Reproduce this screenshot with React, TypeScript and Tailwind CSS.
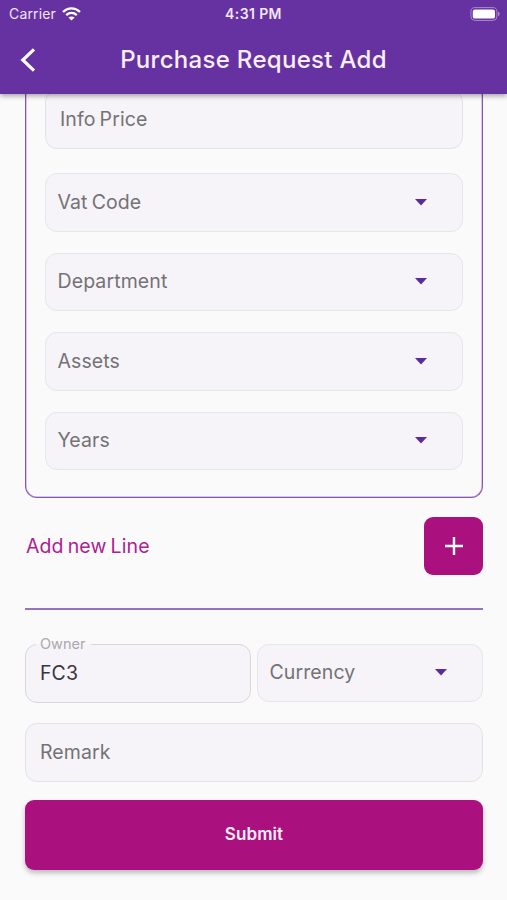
import type { ReactNode } from "react";

interface SelectFieldProps {
	label: string;
	className?: string;
}

function Caret() {
	return (
		<svg width="12" height="7" viewBox="0 0 12 7" fill="#5b2a9d">
			<path d="M0 0H12L6 6.4Z" />
		</svg>
	);
}

function SelectField({ label, className = "" }: SelectFieldProps) {
	return (
		<button
			type="button"
			className={`flex items-center justify-between rounded-xl border border-[#e3e6ea] bg-[#f6f4f8] pl-[11.5px] pr-[35px] text-left text-[19.5px] tracking-[0.1px] text-[#747276] [word-spacing:-1.5px] ${className}`}
		>
			<span>{label}</span>
			<Caret />
		</button>
	);
}

function TextField({
	children,
	className = "",
}: {
	children: ReactNode;
	className?: string;
}) {
	return (
		<div
			className={`flex items-center rounded-xl border pl-3.5 text-[19.5px] tracking-[0.1px] text-[#747276] [word-spacing:-1.5px] ${className}`}
		>
			{children}
		</div>
	);
}

function StatusBar() {
	return (
		<div className="grid h-[27px] grid-cols-[1fr_auto_1fr] items-center px-[7px] text-[14px] text-[#f1e6fb]">
			<div className="flex items-center gap-1.5 pl-0.5">
				<span className="tracking-[0.15px]">Carrier</span>
				<svg width="19" height="14" viewBox="0 0 19 14" fill="none" stroke="#fff" strokeWidth="2.4">
					<path d="M1 5C6 0.2 13 0.2 18 5" />
					<path d="M4.2 8.2C7.4 5.3 11.6 5.3 14.8 8.2" />
					<path d="M6.4 10.6C8.3 9 10.7 9 12.6 10.6L9.5 13.6Z" fill="#fff" stroke="none" />
				</svg>
			</div>
			<span className="text-center font-semibold tracking-[0.4px]">4:31 PM</span>
			<svg className="justify-self-end" width="30" height="14" viewBox="0 0 30 14">
				<rect x="0.9" y="0.6" width="26" height="12.8" rx="4" fill="none" stroke="#a98acb" />
				<rect x="2.8" y="2.4" width="22.2" height="9.2" rx="2.2" fill="#fff" />
				<path d="M28 4.8C30.2 5.4 30.2 8.6 28 9.2Z" fill="#a98acb" />
			</svg>
		</div>
	);
}

export default function App() {
	return (
		<div className="h-[900px] w-[507px] overflow-hidden bg-[#fbfafb] font-['Inter',sans-serif]">
			<header className="relative z-10 h-[94px] bg-[#6631a0] shadow-[0_2px_5px_rgba(0,0,0,0.35)]">
				<StatusBar />
				<div className="grid h-[66px] grid-cols-[60px_1fr_60px] items-center">
					<button type="button" aria-label="Back" className="pl-5">
						<svg width="16" height="24" viewBox="0 0 16 24" fill="none" stroke="#fff" strokeWidth="3.2">
							<path d="M14 1.4L2.8 12L14 22.6" />
						</svg>
					</button>
					<h1 className="text-center text-[24px] font-medium tracking-[0.3px] text-[#f8effd]">
						Purchase Request Add
					</h1>
				</div>
			</header>

			<main className="-mt-1 pl-[25px] pr-6">
				<section className="flex h-[408px] flex-col rounded-b-xl border border-t-0 border-[#8557b5] px-[19px] shadow-[inset_0_0_0_0.5px_#b294d2]">
					<TextField className="mb-6 h-[59px] shrink-0 border-[#e3e2e7] bg-[#f6f4f8]">Info Price</TextField>
					<div className="flex flex-col gap-[21px]">
						<SelectField label="Vat Code" className="h-[58.5px]" />
						<SelectField label="Department" className="h-[58.5px]" />
						<SelectField label="Assets" className="h-[58.5px]" />
						<SelectField label="Years" className="h-[58.5px]" />
					</div>
				</section>

				<div className="mt-[18.5px] flex items-center justify-between">
					<span className="pl-px pt-px text-[19.5px] tracking-[0.1px] text-[#ad2290] [word-spacing:-1.5px]">
						Add new Line
					</span>
					<button
						type="button"
						aria-label="Add line"
						className="flex h-[58.5px] w-[59px] items-center justify-center rounded-[9px] bg-[#aa117f]"
					>
						<svg width="18" height="18" viewBox="0 0 18 18" stroke="#fff" strokeWidth="2.4">
							<path d="M9 0V18M0 9H18" />
						</svg>
					</button>
				</div>

				<div className="mt-[33px] h-0.5 bg-[#9673c1]" />

				<div className="mt-[33.5px] flex justify-between">
					<div className="relative mt-[0.5px] w-[226px]">
						<TextField className="h-[59px] border-[#d9d7dc] bg-[#f6f4f8]">
							<span className="text-[#38353b]">FC3</span>
						</TextField>
						<span className="absolute -top-[9px] left-[11px] bg-linear-to-b from-[#fbfafb] from-50% to-[#f6f4f8] to-50% pl-1 pr-1.5 text-[14.5px] leading-[18px] text-[#aaa8ad]">
							Owner
						</span>
					</div>
					<SelectField label="Currency" className="h-[58.5px] w-[226px]" />
				</div>

				<TextField className="mt-[20px] h-[58.5px] border-[#e3e2e7] bg-[#f6f4f8]">Remark</TextField>

				<button
					type="button"
					className="mt-[18.5px] h-[69.5px] w-full rounded-[9px] bg-[#aa117f] text-[17px] font-semibold tracking-[0.1px] text-[#fdeefa] shadow-[0_3px_5px_rgba(0,0,0,0.25)]"
				>
					Submit
				</button>
			</main>
		</div>
	);
}
